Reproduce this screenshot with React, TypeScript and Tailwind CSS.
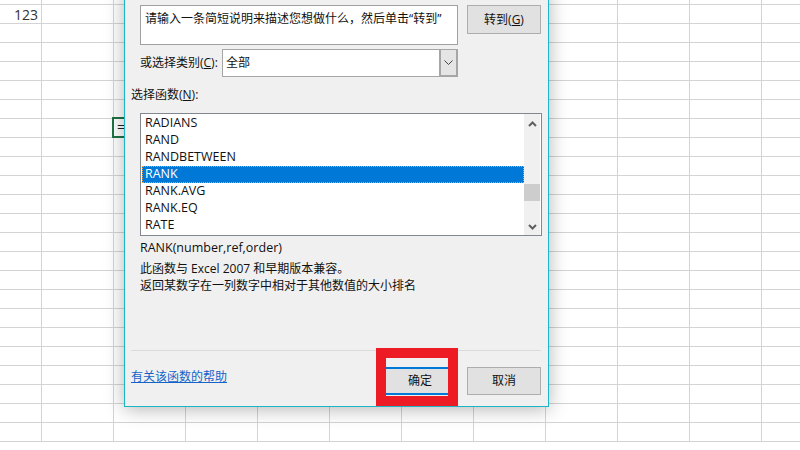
import React from "react";

function ChevUp() {
  return (
    <svg width="9" height="6" viewBox="0 0 9 6">
      <polyline points="1,5 4.5,1.5 8,5" fill="none" stroke="#606060" strokeWidth="2" />
    </svg>
  );
}
function ChevDown() {
  return (
    <svg width="9" height="6" viewBox="0 0 9 6">
      <polyline points="1,1 4.5,4.5 8,1" fill="none" stroke="#606060" strokeWidth="2" />
    </svg>
  );
}

export default function App() {
  const rowHeights = [5, ...Array(23).fill(19)];
  const cols = Array.from({ length: 12 });
  const items = ["RADIANS", "RAND", "RANDBETWEEN", "RANK", "RANK.AVG", "RANK.EQ", "RATE"];
  return (
    <div className="relative w-[800px] h-[450px] overflow-hidden bg-white font-['Open_Sans','Noto_Sans_CJK_SC',sans-serif] text-[12px] text-[#111]">
      {/* spreadsheet grid */}
      <div className="flex flex-col">
        {rowHeights.map((h, r) => (
          <div key={r} className={`flex shrink-0 ${h === 5 ? "h-[5px]" : "h-[19px]"}`}>
            {cols.map((_, c) => (
              <div
                key={c}
                className={`shrink-0 h-full border-r border-b border-[#d4d4d4] ${c === 0 ? "w-[42px]" : "w-[72px]"} ${
                  r === 1 && c === 0 ? "flex items-center justify-end pr-[3px] text-[14px] text-[#333]" : ""
                }`}
              >
                {r === 1 && c === 0 ? "123" : null}
              </div>
            ))}
          </div>
        ))}
      </div>

      {/* selected cell */}
      <div className="absolute left-[112px] top-[117px] w-[20px] h-[21px] border-2 border-[#217346] bg-white pl-[3px] text-[14px] leading-[16px] text-[#222]">
        =
      </div>

      {/* dialog */}
      <div className="absolute left-[124px] top-[-10px] w-[425px] border border-[#1cb5c7] bg-[#f0f0f0] shadow-[0_2px_18px_rgba(0,0,0,0.3)] pl-[6px] pr-[7px] pt-[14px] pb-[11px] flex flex-col">
        <div className="flex items-start gap-[9px] pl-[9px]">
          <div className="w-[318px] h-[40px] bg-white border border-[#a0a0a0] px-[4px] pt-[4px] leading-[17px] whitespace-nowrap overflow-hidden">
            请输入一条简短说明来描述您想做什么，然后单击“转到”
          </div>
          <div className="w-[74px] h-[29px] bg-[#e1e1e1] border border-[#adadad] flex items-center justify-center">
            转到(<span className="underline">G</span>)
          </div>
        </div>

        <div className="mt-[4px] flex items-center pl-[9px]">
          <div className="w-[82px] whitespace-nowrap">
            或选择类别(<span className="underline">C</span>):
          </div>
          <div className="w-[236px] h-[28px] bg-white border border-[#a6a6a6] flex">
            <div className="flex-1 flex items-center pl-[3px]">全部</div>
            <div className="w-[18px] h-full bg-[#e5e5e5] border-l-2 border-r border-b border-[#a6a6a6] flex items-center justify-center">
              <svg width="9" height="5" viewBox="0 0 9 5">
                <polyline points="0.5,0.5 4.5,4.5 8.5,0.5" fill="none" stroke="#444" strokeWidth="1" />
              </svg>
            </div>
          </div>
        </div>

        <div className="mt-[9px] h-[17px] leading-[17px]">
          选择函数(<span className="underline">N</span>):
        </div>

        <div className="mt-[10px] ml-[9px] w-[402px] h-[123px] border border-[#828790] bg-white flex">
          <div className="w-[383px] pt-[1px] pl-[1px] flex flex-col text-[12.5px]">
            {items.map((it) => (
              <div
                key={it}
                className={`h-[17px] flex items-center pl-[2px] border border-dotted ${
                  it === "RANK" ? "bg-[#0078d7] text-white border-[#f0a040]" : "border-transparent"
                }`}
              >
                {it}
              </div>
            ))}
          </div>
          <div className="w-[16px] h-full bg-[#f0f0f0] flex flex-col">
            <div className="h-[17px] flex items-center justify-center pt-[3px]">
              <ChevUp />
            </div>
            <div className="mt-[53px] h-[17px] bg-[#cdcdcd]" />
            <div className="flex-1" />
            <div className="h-[17px] flex items-center justify-center">
              <ChevDown />
            </div>
          </div>
        </div>

        <div className="mt-[3px] ml-[9px] h-[17px] leading-[17px] text-[12.5px]">RANK(number,ref,order)</div>
        <div className="mt-[4px] ml-[9px] leading-[17px]">
          <div>此函数与 Excel 2007 和早期版本兼容。</div>
          <div>返回某数字在一列数字中相对于其他数值的大小排名</div>
        </div>

        <div className="mt-[56px] h-[1px] bg-[#dadada]" />

        <div className="mt-[16px] h-[28px] flex items-center">
          <span className="mb-[8px] text-[#1464c8] underline">有关该函数的帮助</span>
          <div className="ml-auto flex gap-[10px]">
            <div className="w-[74px] h-[28px] bg-[#e1e1e1] border-2 border-[#0078d7] flex items-center justify-center">确定</div>
            <div className="w-[74px] h-[28px] bg-[#e1e1e1] border border-[#adadad] flex items-center justify-center">取消</div>
          </div>
        </div>
      </div>

      {/* red highlight */}
      <div className="absolute left-[376px] top-[348px] w-[82px] h-[58px] border-[10px] border-[#ed1c24]" />
    </div>
  );
}
